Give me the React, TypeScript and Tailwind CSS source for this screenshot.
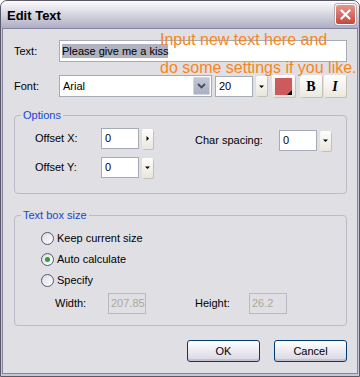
const font = "font-['Liberation_Sans',Arial,sans-serif]";

function ArrowBtn({ dir = 'down' }: { dir?: 'down' | 'right' }) {
  return (
    <div className="ml-[3px] flex h-[20px] w-[11px] items-center justify-center rounded-[2px] bg-linear-to-b from-[#fefefd] to-[#e9e6dc] shadow-[1px_1px_0_#c4c1b4]">
      <svg width="5" height="5" viewBox="0 0 5 5">
        {dir === 'down' ? (
          <path d="M0 1.5h5L2.5 4z" fill="#000" />
        ) : (
          <path d="M1.5 0v5L4 2.5z" fill="#000" />
        )}
      </svg>
    </div>
  );
}

function Field({ value, disabled = false }: { value: string; disabled?: boolean }) {
  return (
    <div
      className={
        disabled
          ? 'flex h-full w-[38px] items-center overflow-hidden whitespace-nowrap border border-[#b9b8c4] bg-[#e0dfe3] pl-[2px] text-[#aca899]'
          : 'flex h-full w-[38px] items-center overflow-hidden whitespace-nowrap border border-[#a5acb5] bg-white pl-[3px]'
      }
    >
      {value}
    </div>
  );
}

function Radio({ label, checked = false }: { label: string; checked?: boolean }) {
  return (
    <div className="flex h-[21px] items-center gap-[3px]">
      <div className="flex h-[13px] w-[13px] items-center justify-center rounded-full border border-[#55557a] bg-linear-to-br from-[#dcdbe2] to-white">
        {checked && <div className="h-[5px] w-[5px] rounded-full bg-[#28a428]" />}
      </div>
      <span>{label}</span>
    </div>
  );
}

export default function App() {
  return (
    <div
      className={`${font} relative flex h-[377px] w-[360px] flex-col overflow-hidden rounded-t-[7px] border border-[#585867] bg-[#c7c6d6] text-[11px] text-black`}
    >
      <div className="flex h-[27px] items-center justify-between bg-linear-to-b from-[#fdfdfe] via-[#d5d5e1] to-[#aeadc4] pl-[6px] pr-[3px]">
        <span className="pt-[3px] text-[13px] font-bold">Edit Text</span>
        <div className="flex h-[21px] w-[21px] items-center justify-center rounded-[3px] border border-white bg-linear-to-b from-[#e8948b] to-[#c2473f] shadow-[0_0_0_1px_#b5a8b0]">
          <svg width="11" height="11" viewBox="0 0 11 11">
            <path d="M1.5 1.5l8 8M9.5 1.5l-8 8" stroke="#fff" strokeWidth="2.2" strokeLinecap="round" />
          </svg>
        </div>
      </div>

      <div className="mx-[1px] mb-[2px] flex-1 border border-[#8584a0] bg-[#e0dfe3] pl-[11px] pr-[10px] pt-[11px]">
        <div className="flex h-[22px] items-center">
          <span className="w-[45px]">Text:</span>
          <div className="flex h-full flex-1 items-center border border-[#a5acb5] bg-white pl-[2px]">
            <span className="bg-[#b0b2bf] leading-[14px]">Please give me a kiss</span>
          </div>
        </div>

        <div className="mt-[13px] flex h-[22px] items-center">
          <span className="w-[45px]">Font:</span>
          <div className="flex h-full w-[153px] items-center justify-between border border-[#a5acb5] bg-white pl-[3px] pr-[1px]">
            <span>Arial</span>
            <div className="flex h-[18px] w-[17px] items-center justify-center rounded-[1px] border border-[#d2d4e0] bg-linear-to-b from-[#c3c6d6] to-[#abafc4]">
              <svg width="9" height="6" viewBox="0 0 9 6">
                <path d="M1 1l3.5 3.5L8 1" stroke="#4a4a5a" strokeWidth="1.8" fill="none" />
              </svg>
            </div>
          </div>
          <div className="ml-[3px] h-[21px]">
            <Field value="20" />
          </div>
          <ArrowBtn />
          <div className="ml-[5px] flex h-[22px] w-[23px] items-center justify-center rounded-[2px] bg-linear-to-b from-[#fdfdfb] to-[#e6e3d8] shadow-[1px_1px_0_#c4c1b4]">
            <div className="relative h-[17px] w-[17px] bg-[#cd5b5e]">
              <svg className="absolute bottom-0 right-0" width="5" height="5" viewBox="0 0 5 5">
                <path d="M5 0v5H0z" fill="#000" />
              </svg>
            </div>
          </div>
          <div className="ml-[5px] flex h-[22px] w-[22px] items-center justify-center rounded-[2px] bg-linear-to-b from-white to-[#ebe8de] shadow-[1px_1px_0_#c4c1b4] font-['Liberation_Serif',serif] text-[14px] font-bold">
            B
          </div>
          <div className="ml-[2px] flex h-[22px] w-[22px] items-center justify-center rounded-[2px] bg-linear-to-b from-white to-[#ebe8de] shadow-[1px_1px_0_#c4c1b4] font-['Liberation_Serif',serif] text-[14px] font-bold italic">
            I
          </div>
        </div>

        <fieldset className="mt-[12px] h-[85px] rounded-[4px] border border-[#bbbac6]">
          <legend className="ml-[6px] px-[2px] leading-[13px] text-[#1546d2]">Options</legend>
          <div className="mt-[6px] grid grid-cols-[160px_1fr] pl-[20px]">
            <div>
              <div className="flex h-[21px] items-center">
                <span className="w-[66px]">Offset X:</span>
                <Field value="0" />
                <ArrowBtn dir="right" />
              </div>
              <div className="mt-[8px] flex h-[21px] items-center">
                <span className="w-[66px]">Offset Y:</span>
                <Field value="0" />
                <ArrowBtn />
              </div>
            </div>
            <div className="pt-[2px]">
              <div className="flex h-[21px] items-center">
                <span className="w-[84px]">Char spacing:</span>
                <Field value="0" />
                <ArrowBtn />
              </div>
            </div>
          </div>
        </fieldset>

        <fieldset className="mt-[15px] h-[117px] rounded-[4px] border border-[#bbbac6]">
          <legend className="ml-[6px] px-[2px] leading-[13px] text-[#1546d2]">Text box size</legend>
          <div className="mt-[6px] pl-[26px]">
            <Radio label="Keep current size" />
            <Radio label="Auto calculate" checked />
            <Radio label="Specify" />
          </div>
          <div className="mt-[2px] flex h-[21px] items-center pl-[40px]">
            <span className="w-[53px]">Width:</span>
            <Field value="207.85" disabled />
            <span className="ml-[49px] w-[54px]">Height:</span>
            <Field value="26.2" disabled />
          </div>
        </fieldset>

        <div className="mt-[14px] flex justify-end gap-[14px]">
          <button className="h-[22px] w-[73px] rounded-[3px] border border-[#003c74] bg-linear-to-b from-white to-[#d8d6e2] shadow-[inset_0_-2px_0_#c5c3d2]">
            OK
          </button>
          <button className="h-[22px] w-[73px] rounded-[3px] border border-[#003c74] bg-linear-to-b from-white to-[#d8d6e2] shadow-[inset_0_-2px_0_#c5c3d2]">
            Cancel
          </button>
        </div>
      </div>

      <div className="pointer-events-none absolute left-[159px] top-[25px] whitespace-nowrap text-[16px] leading-[28px] text-[#f7861c]">
        <div>Input new text here and</div>
        <div>do some settings if you like.</div>
      </div>
    </div>
  );
}
